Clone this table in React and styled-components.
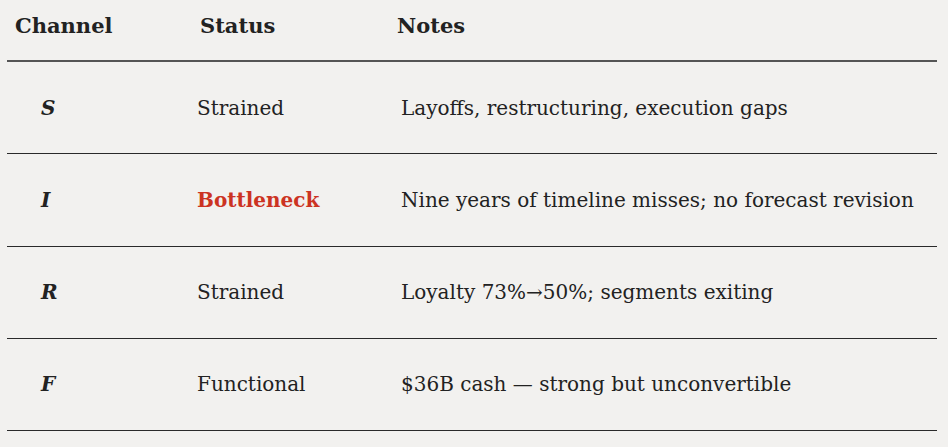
import styled, { createGlobalStyle } from "styled-components";

const GlobalStyle = createGlobalStyle`
  html, body {
    margin: 0;
    padding: 0;
    background: #f2f1ef;
  }
  body {
    font-family: "DejaVu Serif", "Liberation Serif", serif;
    color: #222;
  }
`;

const Table = styled.div`
  margin-left: 7px;
  width: 930px;
`;

const HeadRow = styled.div`
  display: grid;
  grid-template-columns: 185px 197px 1fr;
  align-items: start;
  height: 62px;
  padding-top: 13px;
  box-sizing: border-box;
  border-bottom: 2px solid #555;
`;

const HeadCell = styled.div`
  padding-left: 8px;
  font-size: 21px;
  font-weight: bold;
  color: #222;
`;

const Row = styled.div`
  display: grid;
  grid-template-columns: 185px 197px 1fr;
  align-items: center;
  height: 92.25px;
  box-sizing: border-box;
  border-bottom: 1.5px solid #2a2a2a;
`;

const Cell = styled.div`
  padding-left: ${(p) => p.$pad}px;
  font-size: 20px;
  white-space: nowrap;
  color: ${(p) => (p.$alert ? "#cc3322" : "#222")};
  font-weight: ${(p) => (p.$alert ? "bold" : "normal")};
`;

const Channel = styled(Cell)`
  font-style: italic;
  font-weight: bold;
`;

const rows = [
  { ch: "S", status: "Strained", notes: "Layoffs, restructuring, execution gaps" },
  { ch: "I", status: "Bottleneck", alert: true, notes: "Nine years of timeline misses; no forecast revision" },
  { ch: "R", status: "Strained", notes: "Loyalty 73%\u219250%; segments exiting" },
  { ch: "F", status: "Functional", notes: "$36B cash \u2014 strong but unconvertible" },
];

export default function App() {
  return (
    <>
      <GlobalStyle />
      <Table>
        <HeadRow>
          <HeadCell>Channel</HeadCell>
          <HeadCell>Status</HeadCell>
          <HeadCell>Notes</HeadCell>
        </HeadRow>
        {rows.map((r) => (
          <Row key={r.ch}>
            <Channel $pad={34}>{r.ch}</Channel>
            <Cell $pad={5} $alert={r.alert}>{r.status}</Cell>
            <Cell $pad={12}>{r.notes}</Cell>
          </Row>
        ))}
      </Table>
    </>
  );
}
